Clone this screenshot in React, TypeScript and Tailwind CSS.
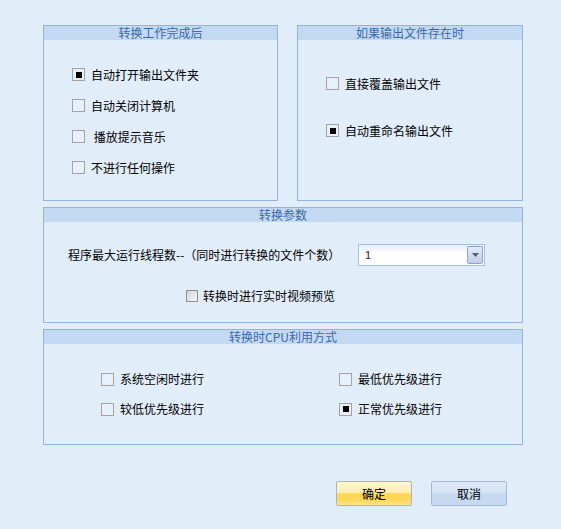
import React from "react";

const FONT = "font-['Noto_Sans_CJK_SC','Noto_Sans',sans-serif]";

function Box({ checked }: { checked?: boolean }) {
  return (
    <span className="w-[13px] h-[13px] shrink-0 border border-[#a3a3a3] bg-[#e8f0fb] flex items-center justify-center">
      {checked && <span className="w-[6px] h-[6px] bg-black" />}
    </span>
  );
}

function Check({ label, checked, gap = "ml-[6px]" }: { label: string; checked?: boolean; gap?: string }) {
  return (
    <div className="flex items-center h-[31px]">
      <Box checked={checked} />
      <span className={`${gap} text-[12px] leading-none text-black whitespace-pre`}>{label}</span>
    </div>
  );
}

function Group({ title, className, children }: { title: string; className: string; children?: React.ReactNode }) {
  return (
    <div className={`border border-[#8fb3e2] flex flex-col ${className}`}>
      <div className="h-[14px] bg-[#c3d9f1] flex items-center justify-center text-[12px] leading-none text-[#3d68a8]">
        {title}
      </div>
      {children}
    </div>
  );
}

export default function App() {
  return (
    <div className={`w-[561px] h-[529px] bg-[#e2edfa] ${FONT} pt-[25px] pl-[43px] flex flex-col`}>
      <div className="flex gap-[19px]">
        <Group title="转换工作完成后" className="w-[235px] h-[176px]">
          <div className="pt-[19px] pl-[28px] flex flex-col">
            <Check label="自动打开输出文件夹" checked />
            <Check label="自动关闭计算机" />
            <Check label=" 播放提示音乐" />
            <Check label="不进行任何操作" />
          </div>
        </Group>
        <Group title="如果输出文件存在时" className="w-[226px] h-[176px]">
          <div className="pt-[28px] pl-[28px] flex flex-col gap-[16px]">
            <Check label="直接覆盖输出文件" />
            <Check label="自动重命名输出文件" checked />
          </div>
        </Group>
      </div>

      <Group title="转换参数" className="w-[480px] h-[116px] mt-[6px]">
        <div className="mt-[22px] pl-[24px] flex items-center h-[22px]">
          <span className="w-[290px] text-[12px] leading-none text-black">程序最大运行线程数--（同时进行转换的文件个数）</span>
          <div className="w-[127px] h-[22px] border border-[#a7c0e2] bg-[linear-gradient(to_bottom,#e6eef9_0%,#ffffff_45%,#ffffff_100%)] flex items-center justify-between pl-[6px] pr-[1px]">
            <span className="text-[11px] leading-none text-[#3a0a2a] font-['Liberation_Sans',sans-serif]">1</span>
            <span className="w-[16px] h-[18px] border border-[#8aa6cc] rounded-[2px] bg-[linear-gradient(to_bottom,#e4edf8_0%,#cfdcee_50%,#bfd0e8_100%)] flex items-center justify-center">
              <svg width="7" height="4" viewBox="0 0 7 4">
                <path d="M0 0 H7 L3.5 4 Z" fill="#4a5f82" />
              </svg>
            </span>
          </div>
        </div>
        <div className="mt-[14px] pl-[142px] flex items-center h-[31px]">
          <span className="w-[12px] h-[12px] border border-[#8e8e8e] bg-[linear-gradient(135deg,#d4d4d4_0%,#f6f6f6_100%)]" />
          <span className="ml-[5px] text-[12px] leading-none text-black">转换时进行实时视频预览</span>
        </div>
      </Group>

      <Group title="转换时CPU利用方式" className="w-[480px] h-[116px] mt-[6px]">
        <div className="pt-[20px] pl-[57px] grid grid-cols-[238px_1fr]">
          <div className="h-[30px] flex items-center">
            <Box />
            <span className="ml-[6px] text-[12px] leading-none text-black">系统空闲时进行</span>
          </div>
          <div className="h-[30px] flex items-center">
            <Box />
            <span className="ml-[6px] text-[12px] leading-none text-black">最低优先级进行</span>
          </div>
          <div className="h-[30px] flex items-center">
            <Box />
            <span className="ml-[6px] text-[12px] leading-none text-black">较低优先级进行</span>
          </div>
          <div className="h-[30px] flex items-center">
            <Box checked />
            <span className="ml-[6px] text-[12px] leading-none text-black">正常优先级进行</span>
          </div>
        </div>
      </Group>

      <div className="mt-[36px] ml-[293px] flex gap-[19px]">
        <button className="w-[76px] h-[25px] border border-[#9fb5d6] rounded-[2px] bg-[linear-gradient(to_bottom,#fff5d2_0%,#ffedb0_45%,#ffd450_52%,#ffd75e_80%,#ffe68f_100%)] text-[12px] leading-none text-black flex items-center justify-center">
          确定
        </button>
        <button className="w-[76px] h-[25px] border border-[#a5bada] rounded-[2px] bg-[linear-gradient(to_bottom,#dde9f7_0%,#d5e3f4_45%,#c5d8ef_52%,#c8daf0_100%)] text-[12px] leading-none text-black flex items-center justify-center">
          取消
        </button>
      </div>
    </div>
  );
}
